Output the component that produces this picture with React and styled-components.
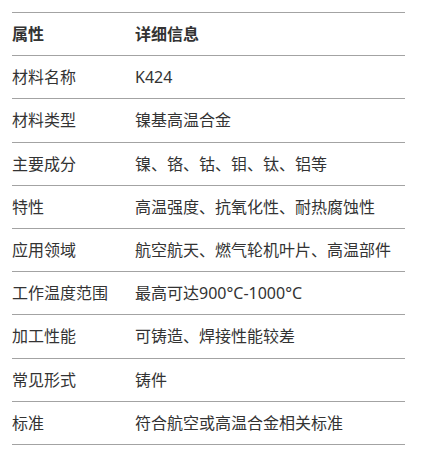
import React from 'react'
import styled, { createGlobalStyle } from 'styled-components'

const GlobalStyle = createGlobalStyle`
body {
  margin: 0;
  background: #FFFFFF;
  font-family: 'Noto Sans', 'Noto Sans CJK SC', sans-serif;
}
`

const PageWrapper = styled.div`
padding: 12px 16px 0 12px;
`

const Table = styled.table`
width: 100%;
border-collapse: collapse;
border-top: 1px solid #A3A3A3;
color: #333333;
font-size: 16px;
`

const Row = styled.tr`
border-bottom: 1px solid #A3A3A3;
`

const Cell = styled.td`
padding: 8px 0;
line-height: 26.2px;
text-align: left;
vertical-align: middle;
font-weight: ${props => (props.head ? 'bold' : 'normal')};
width: ${props => (props.first ? '123px' : 'auto')};
`

const rows = [
    ['材料名称', 'K424'],
    ['材料类型', '镍基高温合金'],
    ['主要成分', '镍、铬、钴、钼、钛、铝等'],
    ['特性', '高温强度、抗氧化性、耐热腐蚀性'],
    ['应用领域', '航空航天、燃气轮机叶片、高温部件'],
    ['工作温度范围', '最高可达900°C-1000°C'],
    ['加工性能', '可铸造、焊接性能较差'],
    ['常见形式', '铸件'],
    ['标准', '符合航空或高温合金相关标准'],
]

export default function App() {
    return (
        <PageWrapper>
            <GlobalStyle />
            <Table>
                <thead>
                    <Row>
                        <Cell as="th" head first>属性</Cell>
                        <Cell as="th" head>详细信息</Cell>
                    </Row>
                </thead>
                <tbody>
                    {rows.map(([name, value]) =>
                        <Row key={name}>
                            <Cell first>{name}</Cell>
                            <Cell>{value}</Cell>
                        </Row>
                    )}
                </tbody>
            </Table>
        </PageWrapper>
    )
}
